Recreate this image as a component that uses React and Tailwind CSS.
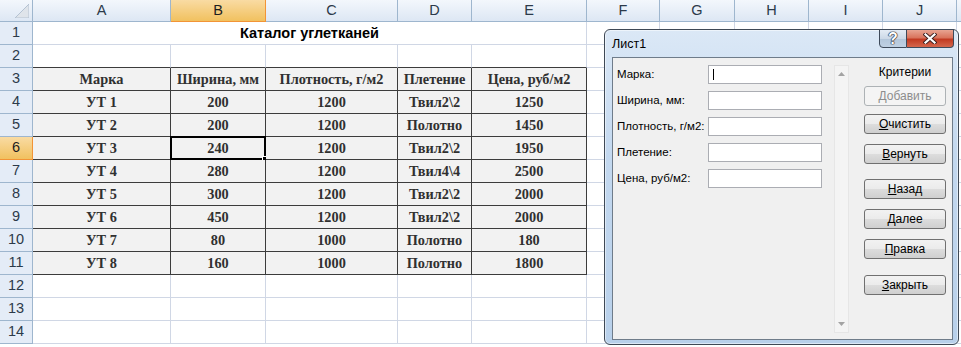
import React from 'react'

const cols = ['A', 'B', 'C', 'D', 'E', 'F', 'G', 'H', 'I', 'J', '']

const header = ['Марка', 'Ширина, мм', 'Плотность, г/м2', 'Плетение', 'Цена, руб/м2']
const rows = [
  ['УТ 1', '200', '1200', 'Твил2\\2', '1250'],
  ['УТ 2', '200', '1200', 'Полотно', '1450'],
  ['УТ 3', '240', '1200', 'Твил2\\2', '1950'],
  ['УТ 4', '280', '1200', 'Твил4\\4', '2500'],
  ['УТ 5', '300', '1200', 'Твил2\\2', '2000'],
  ['УТ 6', '450', '1200', 'Твил2\\2', '2000'],
  ['УТ 7', '80', '1000', 'Полотно', '180'],
  ['УТ 8', '160', '1000', 'Полотно', '1800'],
]

const fields = ['Марка:', 'Ширина, мм:', 'Плотность, г/м2:', 'Плетение:', 'Цена, руб/м2:']

function ColHeader({ label, active }) {
  return (
    <div
      className={
        'h-[22px] flex items-center justify-center border-r border-b text-[14.5px] ' +
        (active
          ? 'bg-[linear-gradient(#f9dba3,#f1c15f)] border-[#f29436] text-[#1e1e1e]'
          : 'bg-[linear-gradient(#f3f7fc,#dde7f4)] border-[#9eb6ce] text-[#2c3a4a]')
      }
    >
      {label}
    </div>
  )
}

function RowHeader({ n, active }) {
  return (
    <div
      className={
        'h-[23px] flex items-center justify-center border-r border-b text-[14.5px] ' +
        (active
          ? 'bg-[linear-gradient(#f9dba3,#f1c15f)] border-[#f29436] text-[#1e1e1e]'
          : 'bg-[#e4ecf7] border-[#9eb6ce] text-[#2c3a4a]')
      }
    >
      {n}
    </div>
  )
}

function Cell({ r, c, children }) {
  // r: sheet row (1-based), c: column index (0 = A)
  const inTable = r >= 3 && r <= 11 && c <= 4
  const bottomDark = inTable || (r === 2 && c <= 4)
  const selected = r === 6 && c === 1
  return (
    <div
      className={
        'relative h-[23px] border-r border-b flex items-center justify-center pt-[2px] ' +
        (inTable ? 'bg-[#f2f2f2] ' : 'bg-white ') +
        (inTable ? 'border-r-[#3c3c3c] ' : 'border-r-[#d0d7e5] ') +
        (bottomDark ? 'border-b-[#3c3c3c]' : 'border-b-[#d0d7e5]')
      }
    >
      {children}
      {selected && (
        <>
          <div className="absolute -left-[1px] -top-[1px] w-[96px] h-[24px] border-2 border-black" />
          <div className="absolute left-[91px] top-[19px] w-[6px] h-[6px] bg-black border border-white" />
        </>
      )}
    </div>
  )
}

function WinButton({ children, disabled, className = '' }) {
  return (
    <div
      className={
        'w-[82px] h-[20px] rounded-[3px] border flex items-center justify-center text-[12px] ' +
        (disabled
          ? 'border-[#adb2b5] bg-[#f4f4f4] text-[#8d8d8d] '
          : 'border-[#707070] bg-[linear-gradient(#f2f2f2_0%,#ebebeb_50%,#dddddd_50%,#cfcfcf_100%)] text-black ') +
        className
      }
    >
      {children}
    </div>
  )
}

function DataForm() {
  return (
    <div className="absolute left-[604px] top-[29px] w-[355px] h-[316px] rounded-[6px] border border-[#3f4955] bg-[linear-gradient(180deg,#dbe8f6_0%,#c3d8ef_40%,#b8d0ea_100%)] shadow-[0_0_0_1px_rgba(255,255,255,0.5)_inset]">
      {/* title bar */}
      <div className="h-[27px] flex items-start justify-between">
        <div className="pl-[7px] pt-[5px] text-[12.5px] text-black">Лист1</div>
        <div className="flex mr-[4px] -mt-[1px]">
          <div className="w-[28px] h-[19px] rounded-bl-[4px] border border-[#3e4a5a] bg-[linear-gradient(#e4ecf5_0%,#ccd9e7_50%,#b3c6da_51%,#bfd0e2_100%)] flex items-center justify-center">
            <span className="text-[16px] font-bold text-white leading-none [text-shadow:0_0_1px_#223,0_0_1px_#223,0_0_1px_#223,0_0_1px_#223]">?</span>
          </div>
          <div className="w-[47px] h-[19px] rounded-br-[4px] border border-l-0 border-[#3e4a5a] bg-[linear-gradient(#e8a492_0%,#d9745d_45%,#c23a22_55%,#d5674d_100%)] flex items-center justify-center">
            <svg width="14" height="11" viewBox="0 0 14 11">
              <path d="M2.5 1.5 L11.5 9.5 M11.5 1.5 L2.5 9.5" stroke="#3c2020" strokeWidth="4" strokeLinecap="square" />
              <path d="M2.5 1.5 L11.5 9.5 M11.5 1.5 L2.5 9.5" stroke="#ffffff" strokeWidth="2.2" strokeLinecap="square" />
            </svg>
          </div>
        </div>
      </div>
      {/* content */}
      <div className="ml-[7px] mr-[5px] h-[283px] border border-[#6f7c8a] bg-[#f0f0f0] flex pl-[4px] pt-[7px] text-[12px] text-black">
        <div className="flex flex-col gap-[7px]">
          {fields.map((f, i) => (
            <div key={f} className="flex items-center h-[19px]">
              <div className="w-[91px] whitespace-nowrap text-[11.5px]">{f}</div>
              <div className="relative w-[114px] h-[19px] border border-[#abadb3] bg-white">
                {i === 0 && <div className="absolute left-[4px] top-[3px] w-[1px] h-[11px] bg-black" />}
              </div>
            </div>
          ))}
        </div>
        <div className="ml-[12px] w-[15px] h-[268px] border border-[#e6e6e6] bg-[#f4f4f4] flex flex-col items-center justify-between py-[6px]">
          <svg width="7" height="4" viewBox="0 0 7 4">
            <path d="M0 4 L3.5 0 L7 4 Z" fill="#a3a3a3" />
          </svg>
          <svg width="7" height="4" viewBox="0 0 7 4">
            <path d="M0 0 L3.5 4 L7 0 Z" fill="#a3a3a3" />
          </svg>
        </div>
        <div className="ml-[15px] w-[82px] flex flex-col">
          <div className="h-[15px] text-center leading-[15px]">Критерии</div>
          <WinButton disabled className="mt-[6px]">Добавить</WinButton>
          <WinButton className="mt-[8px]"><span className="underline">О</span>чистить</WinButton>
          <WinButton className="mt-[10px]"><span className="underline">В</span>ернуть</WinButton>
          <WinButton className="mt-[15px]"><span className="underline">Н</span>азад</WinButton>
          <WinButton className="mt-[10px]"><span className="underline">Д</span>алее</WinButton>
          <WinButton className="mt-[10px]"><span className="underline">П</span>равка</WinButton>
          <WinButton className="mt-[16px]"><span className="underline">З</span>акрыть</WinButton>
        </div>
      </div>
    </div>
  )
}

export default function App() {
  const sheetRows = Array.from({ length: 14 }, (_, i) => i + 1)
  return (
    <div className="relative w-[961px] h-[347px] overflow-hidden bg-white font-['Liberation_Sans',Arial,sans-serif]">
      <div className="grid grid-cols-[33px_138px_95px_132px_74px_115px_73px_75px_74px_74px_74px_80px]">
        {/* corner */}
        <div className="relative h-[22px] border-r border-b border-[#9eb6ce] bg-[linear-gradient(#f3f7fc,#dde7f4)]">
          <svg className="absolute right-[3px] bottom-[3px]" width="14" height="14" viewBox="0 0 14 14">
            <path d="M14 0 L14 14 L0 14 Z" fill="#dfe4ea" stroke="#b4c2d2" strokeWidth="1" />
          </svg>
        </div>
        {cols.map((c, i) => (
          <ColHeader key={i} label={c} active={c === 'B'} />
        ))}

        {sheetRows.map((r) => (
          <React.Fragment key={r}>
            <RowHeader n={r} active={r === 6} />
            {r === 1 ? (
              <>
                <div className="col-span-5 h-[23px] border-r border-b border-[#d0d7e5] flex items-center justify-center pt-[1px] text-[14.5px] font-bold text-black">
                  Каталог углетканей
                </div>
                {cols.slice(5).map((c, ci) => (
                  <Cell key={ci} r={r} c={ci + 5} />
                ))}
              </>
            ) : (
              cols.map((c, ci) => {
                let content = null
                if (r === 3 && ci <= 4) content = header[ci]
                if (r >= 4 && r <= 11 && ci <= 4) content = rows[r - 4][ci]
                return (
                  <Cell key={ci} r={r} c={ci}>
                    {content && (
                      <span className="font-['Liberation_Serif','Times_New_Roman',serif] font-bold text-[14.3px] text-[#303030] whitespace-nowrap">
                        {content}
                      </span>
                    )}
                  </Cell>
                )
              })
            )}
          </React.Fragment>
        ))}
      </div>
      <DataForm />
    </div>
  )
}
